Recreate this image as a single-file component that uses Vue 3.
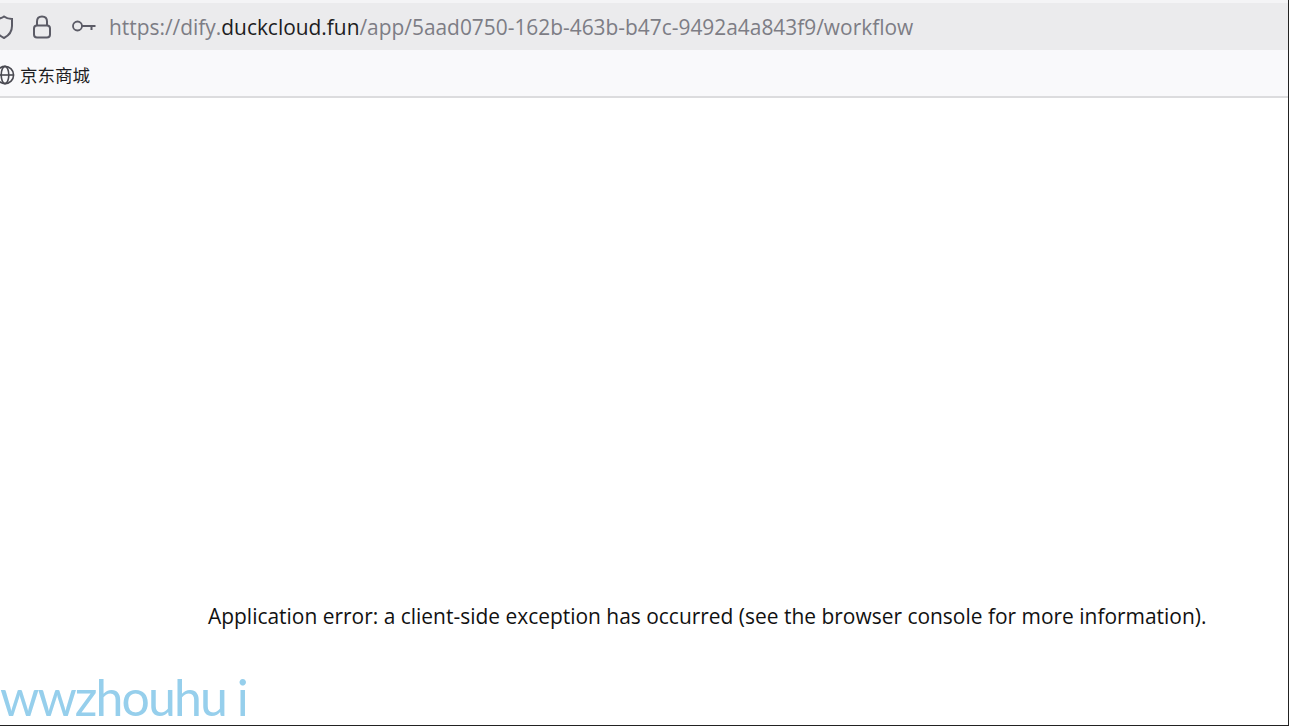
<template>
  <div class="page">
    <div class="top-strip"></div>
    <div class="url-bar">
      <svg class="icon shield" width="18" height="26" viewBox="0 0 18 26">
        <path d="M-1 5 C3 5 6 4 8 2.5 C10 4 13 5 16 5 L16 12 C16 17 13 21.5 8 24 C3 21.5 -1 17 -1 12 Z" fill="none" stroke="#5b5b66" stroke-width="2" />
      </svg>
      <svg class="icon lock" width="22" height="26" viewBox="0 0 22 26">
        <path d="M6 11.5 V7.5 C6 4.5 8 2.5 11 2.5 C14 2.5 16 4.5 16 7.5 V11.5" fill="none" stroke="#5b5b66" stroke-width="2" />
        <rect x="3" y="11.5" width="16" height="12" rx="3" fill="none" stroke="#5b5b66" stroke-width="2" />
      </svg>
      <svg class="icon key" width="24" height="14" viewBox="0 0 24 14">
        <circle cx="5.5" cy="6" r="4.5" fill="none" stroke="#5b5b66" stroke-width="1.8" />
        <path d="M10 6 H23.5 M19.5 6 V10" fill="none" stroke="#5b5b66" stroke-width="2" />
      </svg>
      <div class="url">https://dify.<span class="host">duckcloud.fun</span>/app/5aad0750-162b-463b-b47c-9492a4a843f9/workflow</div>
    </div>
    <div class="bookmarks">
      <svg class="globe" width="18" height="20" viewBox="0 0 18 20">
        <g fill="none" stroke="#4a4a52" stroke-width="1.6">
          <circle cx="6" cy="10" r="8.6" />
          <ellipse cx="6" cy="10" rx="3.8" ry="8.6" />
          <path d="M-3 10 H15" />
        </g>
      </svg>
      <span class="bookmark">京东商城</span>
    </div>
    <main class="content">
      <p class="error">Application error: a client-side exception has occurred (see the browser console for more information).</p>
      <div class="watermark">wwzhouhu<span class="last">i</span></div>
    </main>
  </div>
</template>

<script setup>
</script>

<style>
html,
body {
  margin: 0;
  background: #fff;
  overflow: hidden;
}
</style>

<style scoped>
.page {
  width: 1289px;
  height: 726px;
  box-sizing: border-box;
  display: flex;
  flex-direction: column;
  border-right: 1px solid #222;
  border-bottom: 1px solid #222;
  font-family: "Open Sans", "Noto Sans", sans-serif;
}

.top-strip {
  height: 3px;
  background: #f4f4f6;
}

.url-bar {
  height: 47px;
  display: flex;
  align-items: center;
  background: #ebebed;
}

.icon {
  flex: none;
}

.shield {
  margin-left: -4px;
}

.lock {
  margin-left: 17px;
}

.key {
  margin-left: 19px;
}

.url {
  margin-left: 13px;
  font-size: 20.9px;
  color: #7d7d85;
  white-space: nowrap;
}

.host {
  color: #1d1d22;
}

.bookmarks {
  height: 48px;
  box-sizing: border-box;
  display: flex;
  align-items: center;
  padding-top: 3px;
  background: #f9f9fb;
  border-bottom: 2px solid #dcdcde;
}

.globe {
  flex: none;
  margin-left: -1px;
}

.bookmark {
  margin-left: 3px;
  font-family: "Noto Sans CJK SC", sans-serif;
  font-size: 17.5px;
  color: #1d1d22;
}

.content {
  flex: 1;
  display: flex;
  flex-direction: column;
  justify-content: flex-end;
}

.error {
  margin: 0 0 39px 208px;
  font-family: "Open Sans", sans-serif;
  font-size: 20.94px;
  color: #111;
  white-space: nowrap;
}

.watermark {
  font-family: Lato, sans-serif;
  font-size: 50px;
  line-height: 56px;
  letter-spacing: -1.9px;
  color: #96cfec;
  white-space: nowrap;
}

.last {
  margin-left: 11px;
}
</style>
